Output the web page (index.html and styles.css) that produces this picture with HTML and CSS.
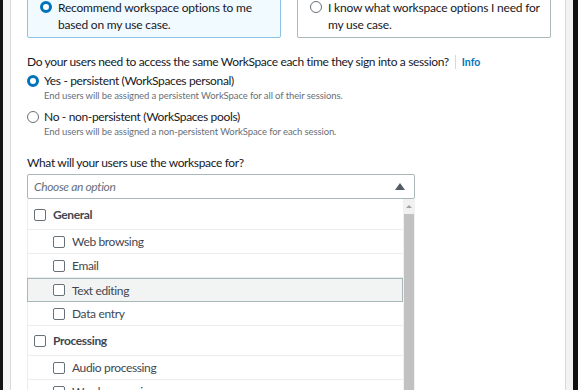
FILE: index.html
```html
<html>
<head>
	<link rel="stylesheet" href="styles.css">
</head>
<body>
	<div class="edge-l"></div>
	<div class="gutter-l"></div>

	<div class="page">
		<div class="cards">
			<div class="card selected">
				<span class="radio on"></span>
				<span>Recommend workspace options to me based on my use case.</span>
			</div>
			<div class="card">
				<span class="radio"></span>
				<span>I know what workspace options I need for my use case.</span>
			</div>
		</div>

		<div class="question">
			Do your users need to access the same WorkSpace each time they sign into a session?
			<span class="sep"></span>
			<a class="info">Info</a>
		</div>

		<div class="choice">
			<span class="radio on"></span>
			<div>
				<div class="choice-title">Yes - persistent (WorkSpaces personal)</div>
				<div class="choice-desc">End users will be assigned a persistent WorkSpace for all of their sessions.</div>
			</div>
		</div>
		<div class="choice">
			<span class="radio"></span>
			<div>
				<div class="choice-title">No - non-persistent (WorkSpaces pools)</div>
				<div class="choice-desc">End users will be assigned a non-persistent WorkSpace for each session.</div>
			</div>
		</div>

		<div class="label">What will your users use the workspace for?</div>
		<div class="select">
			<span class="placeholder">Choose an option</span>
			<span class="caret"></span>
		</div>

		<div class="dropdown">
			<div class="list">
				<div class="row group"><span class="box"></span>General</div>
				<div class="row sub"><span class="box"></span>Web browsing</div>
				<div class="row sub"><span class="box"></span>Email</div>
				<div class="row sub hover"><span class="box"></span>Text editing</div>
				<div class="row sub"><span class="box"></span>Data entry</div>
				<div class="row group"><span class="box"></span>Processing</div>
				<div class="row sub"><span class="box"></span>Audio processing</div>
				<div class="row sub"><span class="box"></span>Word processing</div>
			</div>
			<div class="scrollbar">
				<div class="arrow"></div>
				<div class="thumb"></div>
			</div>
		</div>
	</div>

	<div class="gutter-r"></div>
	<div class="edge-r"></div>
	<div class="tail"></div>
</body>
</html>
```

FILE: styles.css
```css
body {
	margin: 0;
	height: 390px;
	overflow: hidden;
	display: flex;
	font-family: Lato, "Liberation Sans", sans-serif;
	font-size: 12px;
	letter-spacing: -0.35px;
	color: #16191f;
	background: #fff;
}

.edge-l {
	width: 3px;
	background: #111;
}
.gutter-l {
	width: 7px;
	background: #f3f3f3;
	border-right: 1px solid #d9d9d9;
}
.gutter-r {
	width: 7px;
	background: #f3f3f3;
	border-left: 1px solid #d9d9d9;
}
.edge-r {
	width: 5px;
	background: #111;
}
.tail {
	width: 7px;
}

.page {
	flex: 1;
	padding: 0 14px 0 16px;
	overflow: hidden;
}

.cards {
	display: flex;
	gap: 16px;
	margin-top: -15px;
}
.card {
	flex: 1;
	display: flex;
	align-items: flex-start;
	gap: 6px;
	padding: 13px 8px 4px 12px;
	border: 1px solid #aab7b8;
	border-radius: 2px;
	line-height: 17px;
	font-size: 12px;
	letter-spacing: -0.2px;
}
.card.selected {
	background: #f1faff;
	border-color: #8cc3e6;
}

.radio {
	flex: none;
	width: 12px;
	height: 12px;
	box-sizing: border-box;
	border: 1.5px solid #687078;
	border-radius: 50%;
	background: #fff;
	margin-top: 2px;
}
.radio.on {
	border: 3.5px solid #0073bb;
}

.question {
	margin-top: 16px;
	line-height: 16px;
	display: flex;
	align-items: center;
	gap: 6px;
}
.sep {
	width: 1px;
	height: 14px;
	background: #d5dbdb;
}
.info {
	color: #0073bb;
	font-weight: bold;
	font-size: 10.5px;
	letter-spacing: 0;
}

.choice {
	display: flex;
	gap: 5px;
	margin-top: 3px;
}
.choice + .choice {
	margin-top: 6px;
}
.choice-title {
	line-height: 16px;
}
.choice-desc {
	font-size: 9.5px;
	letter-spacing: -0.1px;
	color: #687078;
	line-height: 14px;
}

.label {
	margin-top: 16px;
	line-height: 16px;
}
.select {
	margin-top: 3px;
	height: 23px;
	border: 1px solid #aab7b8;
	border-radius: 2px;
	display: flex;
	align-items: center;
	justify-content: space-between;
	padding: 0 9px 0 6px;
	width: 371px;
}
.placeholder {
	font-style: italic;
	color: #687078;
}
.caret {
	width: 0;
	height: 0;
	border-left: 5px solid transparent;
	border-right: 5px solid transparent;
	border-bottom: 7px solid #545b64;
}

.dropdown {
	display: flex;
	width: 388px;
}
.list {
	flex: 1;
	border-left: 1px solid #eaeded;
	padding-top: 1px;
}
.row {
	display: flex;
	align-items: center;
	gap: 7px;
	border-bottom: 1px solid #eaeded;
	box-sizing: border-box;
	color: #414750;
}
.row.group {
	height: 30px;
	padding-left: 6px;
	font-weight: bold;
}
.row.sub {
	height: 24px;
	padding-left: 25px;
}
.row.hover {
	background: #f2f3f3;
	border: 1px solid #aab7b8;
	margin-left: -1px;
}
.box {
	width: 10px;
	height: 10px;
	border: 1px solid #687078;
	border-radius: 2px;
	background: #fff;
}

.scrollbar {
	width: 12px;
	background: #f1f1f1;
	display: flex;
	flex-direction: column;
	align-items: center;
	padding-top: 2px;
}
.arrow {
	width: 0;
	height: 0;
	border-left: 3px solid transparent;
	border-right: 3px solid transparent;
	border-bottom: 3px solid #a3a3a3;
	margin: 4px 0 6px;
}
.thumb {
	width: 10px;
	flex: 1;
	background: #c1c1c1;
}
```
